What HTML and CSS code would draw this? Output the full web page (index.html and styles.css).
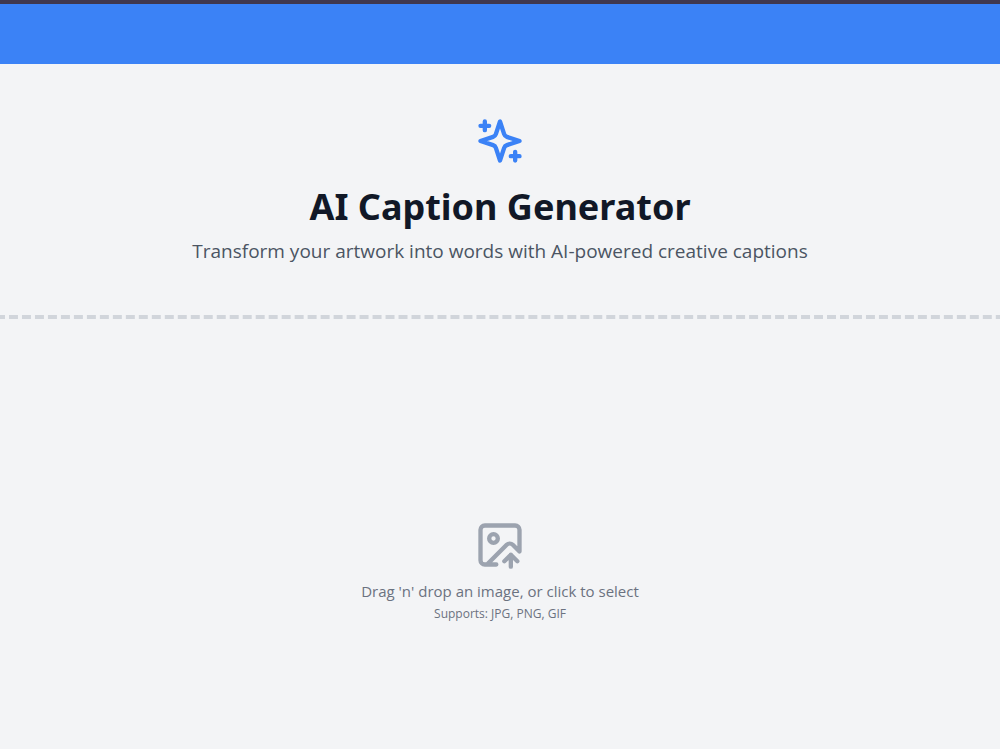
FILE: index.html
```html
<!DOCTYPE html>
<html lang="en">
<head>
<meta charset="utf-8">
<meta name="viewport" content="width=device-width, initial-scale=1">
<title>AI Caption Generator</title>
<link rel="stylesheet" href="styles.css">
</head>
<body>
<div class="topbar"></div>
<main class="page">
  <header class="hero">
    <svg class="hero-icon" viewBox="0 0 24 24" aria-hidden="true">
      <path d="m12 3-1.912 5.813a2 2 0 0 1-1.275 1.275L3 12l5.813 1.912a2 2 0 0 1 1.275 1.275L12 21l1.912-5.813a2 2 0 0 1 1.275-1.275L21 12l-5.813-1.912a2 2 0 0 1-1.275-1.275L12 3Z"/>
      <path d="M5 3v4M3 5h4M19 17v4M17 19h4"/>
    </svg>
    <h1 class="title">AI Caption Generator</h1>
    <p class="subtitle">Transform your artwork into words with AI-powered creative captions</p>
  </header>
  <button class="dropzone" type="button">
    <svg class="drop-icon" viewBox="0 0 24 24" aria-hidden="true">
      <path d="M10.3 21H5a2 2 0 0 1-2-2V5a2 2 0 0 1 2-2h14a2 2 0 0 1 2 2v10l-3.1-3.1a2 2 0 0 0-2.814.014L6 21"/>
      <path d="m14 19.5 3-3 3 3M17 22v-5.5"/>
      <circle cx="9" cy="9" r="2"/>
    </svg>
    <span class="drop-text">Drag 'n' drop an image, or click to select</span>
    <span class="drop-hint">Supports: JPG, PNG, GIF</span>
  </button>
</main>
</body>
</html>
```
FILE: styles.css
```css
* { box-sizing: border-box; }
body {
  margin: 0;
  min-height: 100vh;
  display: flex;
  flex-direction: column;
  background: #f3f4f6;
  font-family: "Segoe UI", "Open Sans", "Noto Sans", sans-serif;
}
.topbar {
  height: 64px;
  flex: none;
  background: #3b82f6;
  border-top: 4px solid #40384f;
}
.page { flex: 1; display: flex; flex-direction: column; }
.hero {
  display: flex;
  flex-direction: column;
  align-items: center;
  padding: 51px 16px 50px;
  text-align: center;
}
.hero-icon, .drop-icon {
  width: 52px;
  height: 52px;
  fill: none;
  stroke: currentColor;
  stroke-width: 2;
  stroke-linecap: round;
  stroke-linejoin: round;
}
.hero-icon { color: #3b82f6; }
.title {
  margin: 16px 0 0;
  font-family: "Segoe UI", "Noto Sans", "Open Sans", sans-serif;
  font-size: 36px;
  line-height: 48px;
  font-weight: 700;
  color: #111827;
}
.subtitle {
  margin: 6px 0 0;
  font-size: 19px;
  line-height: 28px;
  color: #4b5563;
}
.dropzone {
  flex: 1;
  display: flex;
  flex-direction: column;
  align-items: center;
  justify-content: center;
  padding: 80px 16px 0;
  border: 0;
  /* dashed top edge, rounded to whole dashes across the width */
  background: linear-gradient(90deg, #d1d5db 5px, transparent 5px, transparent 9px, #d1d5db 9px) 0 0 / 13px 4px;
  background-repeat: round no-repeat;
  font-family: inherit;
  cursor: pointer;
}
.drop-icon { color: #9ca3af; }
.drop-text { margin-top: 8px; font-size: 15px; line-height: 24px; color: #6b7280; }
.drop-hint { font-size: 12px; line-height: 22px; color: #6b7280; }
```
